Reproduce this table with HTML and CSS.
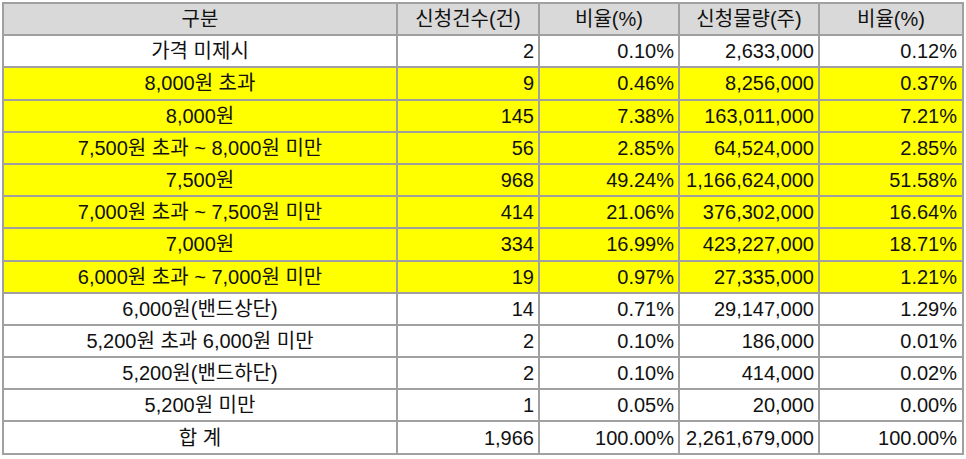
FILE: index.html
```html
<!DOCTYPE html>
<html lang="ko">
<head>
<meta charset="utf-8">
<link rel="stylesheet" href="styles.css">
</head>
<body>
<table class="grid">
  <colgroup>
    <col class="c1"><col class="c2"><col class="c3"><col class="c4"><col class="c5">
  </colgroup>
  <thead>
    <tr class="head"><th>구분</th><th>신청건수(건)</th><th>비율(%)</th><th>신청물량(주)</th><th>비율(%)</th></tr>
  </thead>
  <tbody>
    <tr><td class="lbl">가격 미제시</td><td>2</td><td>0.10%</td><td>2,633,000</td><td>0.12%</td></tr>
    <tr class="hl"><td class="lbl">8,000원 초과</td><td>9</td><td>0.46%</td><td>8,256,000</td><td>0.37%</td></tr>
    <tr class="hl"><td class="lbl">8,000원</td><td>145</td><td>7.38%</td><td>163,011,000</td><td>7.21%</td></tr>
    <tr class="hl"><td class="lbl">7,500원 초과 ~ 8,000원 미만</td><td>56</td><td>2.85%</td><td>64,524,000</td><td>2.85%</td></tr>
    <tr class="hl"><td class="lbl">7,500원</td><td>968</td><td>49.24%</td><td>1,166,624,000</td><td>51.58%</td></tr>
    <tr class="hl"><td class="lbl">7,000원 초과 ~ 7,500원 미만</td><td>414</td><td>21.06%</td><td>376,302,000</td><td>16.64%</td></tr>
    <tr class="hl"><td class="lbl">7,000원</td><td>334</td><td>16.99%</td><td>423,227,000</td><td>18.71%</td></tr>
    <tr class="hl"><td class="lbl">6,000원 초과 ~ 7,000원 미만</td><td>19</td><td>0.97%</td><td>27,335,000</td><td>1.21%</td></tr>
    <tr><td class="lbl">6,000원(밴드상단)</td><td>14</td><td>0.71%</td><td>29,147,000</td><td>1.29%</td></tr>
    <tr><td class="lbl">5,200원 초과 6,000원 미만</td><td>2</td><td>0.10%</td><td>186,000</td><td>0.01%</td></tr>
    <tr><td class="lbl">5,200원(밴드하단)</td><td>2</td><td>0.10%</td><td>414,000</td><td>0.02%</td></tr>
    <tr><td class="lbl">5,200원 미만</td><td>1</td><td>0.05%</td><td>20,000</td><td>0.00%</td></tr>
    <tr><td class="lbl">합 계</td><td>1,966</td><td>100.00%</td><td>2,261,679,000</td><td>100.00%</td></tr>
  </tbody>
</table>
</body>
</html>
```
FILE: styles.css
```css
html, body {
  margin: 0;
  padding: 0;
  background: #ffffff;
}
body {
  padding: 2px 0 0 2px;
  font-family: "Liberation Sans", Arial, "Noto Sans CJK KR", sans-serif;
  font-size: 20px;
  color: #111;
}
.grid {
  border-collapse: collapse;
  table-layout: fixed;
  width: 960px;
  border: 2px solid #a0a0a0;
}
.c1 { width: 394px; }
.c2 { width: 142px; }
.c3 { width: 140px; }
.c4 { width: 140px; }
.c5 { width: 144px; }
.grid th,
.grid td {
  border: 2px solid #a0a0a0;
  height: 30.2px;
  padding: 0 4px 0 0;
  text-align: right;
  font-weight: normal;
  line-height: 22px;
  white-space: nowrap;
  vertical-align: middle;
}
.grid td:last-child {
  padding-right: 5px;
}
.grid th {
  text-align: center;
  padding: 0;
  background: #d9d9d9;
}
.grid td.lbl {
  text-align: center;
  padding: 0;
}
.hl td {
  background: #ffff00;
}
```
